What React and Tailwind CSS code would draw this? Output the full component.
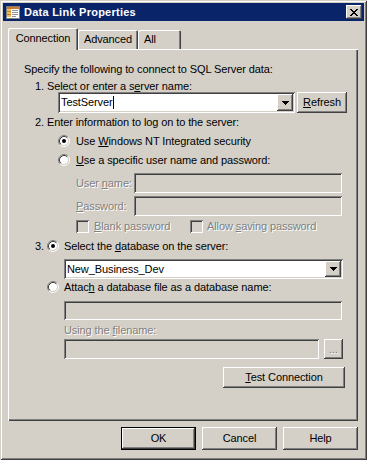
import React from "react";

const raised =
  "shadow-[inset_-1px_-1px_#404040,inset_1px_1px_#ffffff,inset_-2px_-2px_#808080,inset_2px_2px_#d4d0c8]";
const sunken =
  "shadow-[inset_1px_1px_#808080,inset_-1px_-1px_#ffffff,inset_2px_2px_#404040,inset_-2px_-2px_#d4d0c8]";
const disabledText = "text-[#808080] [text-shadow:1px_1px_0_#ffffff]";

function TitleIcon() {
  return (
    <svg width="16" height="16" viewBox="0 0 16 16" shapeRendering="crispEdges" className="shrink-0">
      <rect x="1" y="2" width="13" height="12" fill="#ffffff" stroke="#808080" />
      <rect x="1.5" y="2.5" width="12" height="2" fill="#c87832" />
      <rect x="2" y="5" width="4" height="8" fill="#f0c050" />
      <rect x="2" y="7" width="4" height="1" fill="#c87832" />
      <rect x="2" y="10" width="4" height="1" fill="#c87832" />
      <rect x="7" y="6" width="6" height="1" fill="#9090a0" />
      <rect x="7" y="8" width="6" height="1" fill="#9090a0" />
      <rect x="7" y="10" width="6" height="1" fill="#9090a0" />
      <rect x="7" y="12" width="4" height="1" fill="#9090a0" />
    </svg>
  );
}

function CloseX() {
  const rows = [
    [0, 2, 6, 2],
    [1, 2, 5, 2],
    [2, 4],
    [3, 2],
    [2, 4],
    [1, 2, 5, 2],
    [0, 2, 6, 2],
  ];
  return (
    <svg width="8" height="7" viewBox="0 0 8 7" shapeRendering="crispEdges">
      {rows.map((r, y) => (
        <g key={y}>
          <rect x={r[0]} y={y} width={r[1]} height="1" fill="#000" />
          {r.length > 2 && <rect x={r[2]} y={y} width={r[3]} height="1" fill="#000" />}
        </g>
      ))}
    </svg>
  );
}

function DownArrow() {
  return (
    <svg width="7" height="4" viewBox="0 0 7 4" shapeRendering="crispEdges">
      <rect x="0" y="0" width="7" height="1" fill="#000" />
      <rect x="1" y="1" width="5" height="1" fill="#000" />
      <rect x="2" y="2" width="3" height="1" fill="#000" />
      <rect x="3" y="3" width="1" height="1" fill="#000" />
    </svg>
  );
}

function Radio({ checked }) {
  return (
    <svg width="12" height="12" viewBox="0 0 12 12" className="shrink-0">
      <circle cx="6" cy="6" r="4.2" fill="#ffffff" />
      <path d="M2.11 9.89 A5.5 5.5 0 0 1 9.89 2.11" stroke="#808080" fill="none" />
      <path d="M9.89 2.11 A5.5 5.5 0 0 1 2.11 9.89" stroke="#ffffff" fill="none" />
      <path d="M2.82 9.18 A4.5 4.5 0 0 1 9.18 2.82" stroke="#404040" fill="none" />
      <path d="M9.18 2.82 A4.5 4.5 0 0 1 2.82 9.18" stroke="#d4d0c8" fill="none" />
      {checked && <circle cx="6" cy="6" r="2" fill="#000000" />}
    </svg>
  );
}

function Checkbox() {
  return <div className={`w-[13px] h-[13px] shrink-0 bg-[#d4d0c8] ${sunken}`} />;
}

function Button({ className, children }) {
  return (
    <div className={`flex items-center justify-center bg-[#d4d0c8] ${raised} ${className}`}>
      {children}
    </div>
  );
}

export default function App() {
  return (
    <div className="w-[367px] h-[460px] bg-[#d4d0c8] p-[3px] flex flex-col font-['Liberation_Sans',Arial,sans-serif] text-[11px] leading-[13px] tracking-[-0.1px] text-black shadow-[inset_1px_1px_#d4d0c8,inset_-1px_-1px_#404040,inset_2px_2px_#ffffff,inset_-2px_-2px_#808080] select-none">
      {/* Title bar */}
      <div className="h-[18px] shrink-0 bg-[#0a246a] flex items-center pl-[2px] pr-[2px]">
        <TitleIcon />
        <span className="ml-[3px] text-white font-bold tracking-[0.25px]">Data Link Properties</span>
        <div className={`ml-auto w-[16px] h-[14px] bg-[#d4d0c8] flex items-center justify-center ${raised}`}>
          <CloseX />
        </div>
      </div>

      {/* Tabs */}
      <div className="mt-[7px] h-[21px] pl-[5px] flex items-end shrink-0">
        <div className="relative z-10 -mb-px w-[70px] h-[22px] bg-[#d4d0c8] rounded-t-[2px] flex justify-center pt-[4px] shadow-[inset_1px_1px_#ffffff,inset_-1px_0_#404040,inset_-2px_0_#808080]">
          Connection
        </div>
        <div className="w-[60px] h-[19px] rounded-t-[2px] flex justify-center pt-[3px] shadow-[inset_1px_1px_#ffffff,inset_-1px_0_#404040,inset_-2px_0_#808080]">
          Advanced
        </div>
        <div className="w-[43px] h-[19px] rounded-t-[2px] flex justify-start pl-[6px] pt-[3px] shadow-[inset_1px_1px_#ffffff,inset_-1px_0_#404040,inset_-2px_0_#808080]">
          All
        </div>
      </div>

      {/* Panel */}
      <div className="ml-[5px] w-[350px] h-[372px] shrink-0 flex flex-col shadow-[inset_1px_1px_#ffffff,inset_-1px_-1px_#404040,inset_-2px_-2px_#808080]">
        <div className="mt-[14px] h-[13px] pl-[16px] whitespace-nowrap">
          Specify the following to connect to SQL Server data:
        </div>
        <div className="mt-[4px] h-[12px] pl-[27px] whitespace-nowrap">
          1. Select or enter a s<u>e</u>rver name:
        </div>
        <div className="h-[21px] pl-[50px] flex items-center">
          <div className={`w-[237px] h-[21px] bg-white p-[2px] flex items-center ${sunken}`}>
            <span className="pl-[1px]">TestServer</span>
            <span className="w-px h-[13px] bg-black" />
            <div className={`ml-auto w-[16px] h-full bg-[#d4d0c8] flex items-center justify-center ${raised}`}>
              <DownArrow />
            </div>
          </div>
          <Button className="ml-[2px] w-[50px] h-[21px]">
            <span>
              <u>R</u>efresh
            </span>
          </Button>
        </div>
        <div className="mt-[3px] h-[13px] pl-[27px] whitespace-nowrap">
          2. Enter information to log on to the server:
        </div>
        <div className="mt-[5px] h-[14px] pl-[50px] flex items-center">
          <Radio checked />
          <span className="ml-[6px] whitespace-nowrap">
            Use <u>W</u>indows NT Integrated security
          </span>
        </div>
        <div className="mt-[5px] h-[14px] pl-[50px] flex items-center">
          <Radio />
          <span className="ml-[6px] whitespace-nowrap">
            <u>U</u>se a specific user name and password:
          </span>
        </div>
        <div className="mt-[6px] h-[20px] pl-[68px] flex items-center">
          <span className={`w-[58px] whitespace-nowrap ${disabledText}`}>
            User <u>n</u>ame:
          </span>
          <div className={`w-[208px] h-[20px] bg-[#d4d0c8] ${sunken}`} />
        </div>
        <div className="mt-[3px] h-[20px] pl-[68px] flex items-center">
          <span className={`w-[58px] whitespace-nowrap ${disabledText}`}>
            <u>P</u>assword:
          </span>
          <div className={`w-[208px] h-[20px] bg-[#d4d0c8] ${sunken}`} />
        </div>
        <div className="mt-[3px] h-[14px] pl-[68px] flex items-center">
          <div className="w-[114px] flex items-center">
            <Checkbox />
            <span className={`ml-[5px] whitespace-nowrap ${disabledText}`}>
              <u>B</u>lank password
            </span>
          </div>
          <Checkbox />
          <span className={`ml-[4px] whitespace-nowrap ${disabledText}`}>
            Allow <u>s</u>aving password
          </span>
        </div>
        <div className="mt-[6px] h-[14px] pl-[27px] flex items-center">
          <span className="w-[12px]">3.</span>
          <Radio checked />
          <span className="ml-[5px] whitespace-nowrap">
            Select the <u>d</u>atabase on the server:
          </span>
        </div>
        <div className="mt-[6px] h-[20px] pl-[56px] flex items-center">
          <div className={`w-[279px] h-[20px] bg-white p-[2px] flex items-center ${sunken}`}>
            <span className="pl-[1px] whitespace-nowrap">New_Business_Dev</span>
            <div className={`ml-auto w-[16px] h-full bg-[#d4d0c8] flex items-center justify-center ${raised}`}>
              <DownArrow />
            </div>
          </div>
        </div>
        <div className="mt-[1px] h-[14px] pl-[39px] flex items-center">
          <Radio />
          <span className="ml-[5px] whitespace-nowrap">
            Attac<u>h</u> a database file as a database name:
          </span>
        </div>
        <div className="mt-[7px] h-[19px] pl-[56px] flex">
          <div className={`w-[278px] h-[19px] bg-[#d4d0c8] ${sunken}`} />
        </div>
        <div className={`mt-[4px] h-[13px] pl-[56px] whitespace-nowrap ${disabledText}`}>
          Using the <u>f</u>ilename:
        </div>
        <div className="mt-[2px] h-[20px] pl-[56px] flex items-center">
          <div className={`w-[255px] h-[20px] bg-[#d4d0c8] ${sunken}`} />
          <Button className="ml-[5px] w-[19px] h-[20px]">
            <span className={`leading-[10px] ${disabledText}`}>...</span>
          </Button>
        </div>
        <div className="mt-[8px] h-[21px] pl-[215px] flex">
          <Button className="w-[122px] h-[21px]">
            <span>
              <u>T</u>est Connection
            </span>
          </Button>
        </div>
      </div>

      {/* Bottom buttons */}
      <div className="mt-[6px] pr-[6px] flex justify-end gap-[6px] shrink-0">
        <div className="w-[75px] h-[23px] border border-black">
          <Button className="w-full h-full">OK</Button>
        </div>
        <Button className="w-[75px] h-[23px]">Cancel</Button>
        <Button className="w-[75px] h-[23px]">Help</Button>
      </div>
    </div>
  );
}
